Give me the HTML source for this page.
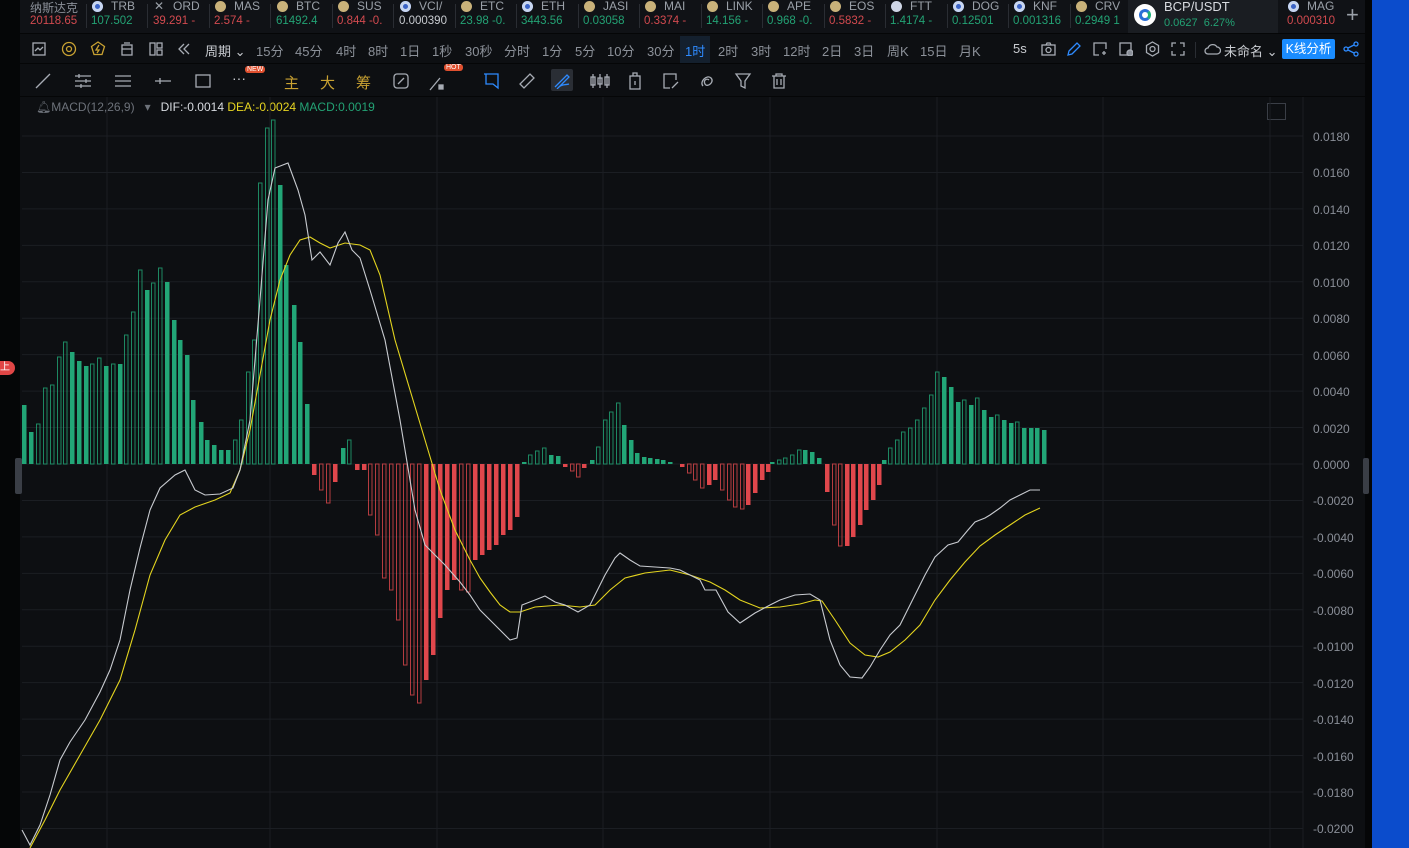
<!DOCTYPE html>
<html><head><meta charset="utf-8">
<style>
*{margin:0;padding:0;box-sizing:border-box}
body{width:1409px;height:848px;overflow:hidden;background:#0d0f12;font-family:"Liberation Sans","Noto Sans CJK SC",sans-serif;position:relative;color:#8a8f98}
.abs{position:absolute}
#blue{left:1372px;top:0;width:37px;height:848px;background:#0b4ccc}
#edge{left:1365px;top:0;width:7px;height:848px;background:#050607}
#leftb{left:0;top:0;width:20px;height:848px;background:#050607}
#tick{left:20px;top:0;width:1345px;height:33px;background:#101216}
.tk{position:absolute;top:0;height:33px;width:60px;overflow:hidden;font-size:11.5px;white-space:nowrap}
.tk .n{position:absolute;left:22px;top:-1px;color:#9aa0a8;font-size:12px}
.tk .i{position:absolute;left:3px;top:1px;width:11px;height:11px;border-radius:50%;background:#c9b27a}
.tk .i.b{background:#3b63c6;box-shadow:inset 0 0 0 3px #c8d6f0}
.tk .p{position:absolute;left:2px;top:15px}
.g{color:#23a274}.r{color:#d24a4f}.w{color:#c9ccd1}
.sep{position:absolute;top:4px;width:1px;height:24px;background:#2a2d33}
#row2{left:20px;top:36px;width:1345px;height:27px;font-size:13px;color:#8c9199}
#row2 span{position:absolute;top:5px}
#row3{left:20px;top:66px;width:1345px;height:30px}
.ic{position:absolute;stroke:#a7acb4;fill:none;stroke-width:1.3}
#hdr{left:36px;top:100px;font-size:12px}
.ylab{position:absolute;left:1313px;font-size:12px;color:#8a8f98}
</style></head><body>
<div class="abs" id="leftb"></div>
<div class="abs" id="edge"></div>
<div class="abs" id="blue"></div>
<div class="abs" id="tick">
 <div class="tk" style="left:8px"><span class="n" style="left:2px;color:#8a8f98">纳斯达克</span><span class="p r">20118.65</span></div>
 <div class="tk" style="left:69px"><i class="i b"></i><span class="n">TRB</span><span class="p g">107.502</span></div>
 <div class="tk" style="left:131px"><span class="n" style="left:3px">✕</span><span class="n">ORD</span><span class="p r">39.291 -</span></div>
 <div class="tk" style="left:192px"><i class="i"></i><span class="n">MAS</span><span class="p r">2.574 -</span></div>
 <div class="tk" style="left:254px"><i class="i"></i><span class="n">BTC</span><span class="p g">61492.4</span></div>
 <div class="tk" style="left:315px"><i class="i"></i><span class="n">SUS</span><span class="p r">0.844 -0.</span></div>
 <div class="tk" style="left:377px"><i class="i b"></i><span class="n">VCI/</span><span class="p w">0.000390</span></div>
 <div class="tk" style="left:438px"><i class="i"></i><span class="n">ETC</span><span class="p g">23.98 -0.</span></div>
 <div class="tk" style="left:499px"><i class="i b"></i><span class="n">ETH</span><span class="p g">3443.56</span></div>
 <div class="tk" style="left:561px"><i class="i"></i><span class="n">JASI</span><span class="p g">0.03058</span></div>
 <div class="tk" style="left:622px"><i class="i"></i><span class="n">MAI</span><span class="p r">0.3374 -</span></div>
 <div class="tk" style="left:684px"><i class="i"></i><span class="n">LINK</span><span class="p g">14.156 -</span></div>
 <div class="tk" style="left:745px"><i class="i"></i><span class="n">APE</span><span class="p g">0.968 -0.</span></div>
 <div class="tk" style="left:807px"><i class="i"></i><span class="n">EOS</span><span class="p r">0.5832 -</span></div>
 <div class="tk" style="left:868px"><i class="i" style="background:#cfd6e6"></i><span class="n">FTT</span><span class="p g">1.4174 -</span></div>
 <div class="tk" style="left:930px"><i class="i b"></i><span class="n">DOG</span><span class="p g">0.12501</span></div>
 <div class="tk" style="left:991px"><i class="i b"></i><span class="n">KNF</span><span class="p g">0.001316</span></div>
 <div class="tk" style="left:1053px"><i class="i"></i><span class="n">CRV</span><span class="p g">0.2949 1</span></div>
 <div style="position:absolute;left:1108px;top:0;width:150px;height:33px;background:#1a1d22">
  <div style="position:absolute;left:6px;top:4px;width:22px;height:22px;border-radius:50%;background:#fff"><div style="position:absolute;left:5px;top:5px;width:12px;height:12px;border-radius:50%;border:3px solid #2a6fd6;border-right-color:#1db07a"></div></div>
  <span style="position:absolute;left:36px;top:-1px;color:#d8dbe0;font-size:13px">BCP/USDT</span>
  <span style="position:absolute;left:36px;top:17px;font-size:11px" class="g">0.0627 &nbsp;6.27%</span>
 </div>
 <div class="tk" style="left:1265px"><i class="i b"></i><span class="n">MAG</span><span class="p r">0.000310</span></div>
 <span style="position:absolute;left:1326px;top:2px;font-size:22px;color:#9aa0a8">+</span>
 <div class="sep" style="left:66px"></div><div class="sep" style="left:127px"></div><div class="sep" style="left:189px"></div><div class="sep" style="left:250px"></div><div class="sep" style="left:312px"></div><div class="sep" style="left:373px"></div><div class="sep" style="left:435px"></div><div class="sep" style="left:496px"></div><div class="sep" style="left:558px"></div><div class="sep" style="left:619px"></div><div class="sep" style="left:681px"></div><div class="sep" style="left:742px"></div><div class="sep" style="left:804px"></div><div class="sep" style="left:865px"></div><div class="sep" style="left:927px"></div><div class="sep" style="left:988px"></div><div class="sep" style="left:1050px"></div>
</div>
<div class="abs" style="left:20px;top:33px;width:1345px;height:1px;background:#050607"></div>
<div class="abs" id="row2">
 <svg class="ic" style="left:12px;top:6px" width="14" height="14"><rect x="1" y="1" width="12" height="12"/><path d="M3 9l3-3 2 2 3-3"/></svg>
 <svg class="ic" style="left:41px;top:5px;stroke:#c9a232" width="16" height="16"><circle cx="8" cy="8" r="6.5"/><circle cx="8" cy="8" r="2.5"/></svg>
 <svg class="ic" style="left:70px;top:5px;stroke:#c9a232" width="16" height="16"><path d="M8 1l6.5 4.5-2.5 8h-8l-2.5-8z"/><path d="M9 4l-3 5h3l-2 3"/></svg>
 <svg class="ic" style="left:100px;top:6px" width="14" height="14"><rect x="2" y="3" width="10" height="10"/><path d="M2 7h10M4 1h6"/></svg>
 <svg class="ic" style="left:129px;top:6px" width="14" height="14"><rect x="1" y="1" width="5" height="12"/><rect x="8" y="1" width="5" height="5"/><rect x="8" y="8" width="5" height="5"/></svg>
 <svg class="ic" style="left:157px;top:6px" width="14" height="14"><path d="M7 2l-5 5 5 5M12 2l-5 5 5 5"/></svg>
 <span style="left:185px;color:#c9ccd1">周期 ⌄</span>
 <span style="left:236px">15分</span><span style="left:275px">45分</span><span style="left:316px">4时</span><span style="left:348px">8时</span><span style="left:380px">1日</span><span style="left:412px">1秒</span><span style="left:445px">30秒</span><span style="left:484px">分时</span><span style="left:522px">1分</span><span style="left:555px">5分</span><span style="left:587px">10分</span><span style="left:627px">30分</span>
 <div style="position:absolute;left:660px;top:0;width:30px;height:27px;background:#14202e"></div>
 <span style="left:665px;color:#2e8bff">1时</span><span style="left:698px">2时</span><span style="left:731px">3时</span><span style="left:763px">12时</span><span style="left:802px">2日</span><span style="left:834px">3日</span><span style="left:867px">周K</span><span style="left:900px">15日</span><span style="left:939px">月K</span>
 <span style="left:993px;color:#c9ccd1">5s</span>
 <svg class="ic" style="left:1021px;top:6px" width="15" height="14"><rect x="1" y="3" width="13" height="10"/><circle cx="7.5" cy="8" r="2.5"/><path d="M5 3l1-2h3l1 2"/></svg>
 <svg class="ic" style="left:1046px;top:6px;stroke:#2e8bff" width="15" height="15"><path d="M2 13l1-4 8-8 3 3-8 8z"/></svg>
 <svg class="ic" style="left:1073px;top:6px" width="14" height="14"><path d="M6 13H1V1h12v6M9 11h4M11 9v4"/></svg>
 <svg class="ic" style="left:1099px;top:6px" width="14" height="14"><rect x="1" y="1" width="11" height="12"/><circle cx="11" cy="11" r="3" fill="#8a8f98"/></svg>
 <svg class="ic" style="left:1125px;top:5px" width="15" height="16"><path d="M7.5 1l6 3.5v7l-6 3.5-6-3.5v-7z"/><circle cx="7.5" cy="8" r="2.5"/></svg>
 <svg class="ic" style="left:1151px;top:6px" width="14" height="14"><path d="M1 5V1h4M9 1h4v4M13 9v4H9M5 13H1V9"/></svg>
 <div style="position:absolute;left:1175px;top:6px;width:1px;height:16px;background:#2a2d33"></div>
 <svg class="ic" style="left:1184px;top:7px" width="17" height="12"><path d="M4 11a3 3 0 010-6 5 5 0 019-1 3.5 3.5 0 010 7z"/></svg>
 <span style="left:1204px;color:#c9ccd1">未命名 ⌄</span>
 <div style="position:absolute;left:1262px;top:3px;width:53px;height:20px;background:#1a8cff;color:#fff;font-size:12.5px;text-align:center;line-height:20px;border-radius:2px">K线分析</div>
 <svg class="ic" style="left:1323px;top:5px;stroke:#2e8bff" width="16" height="16"><circle cx="3" cy="8" r="2"/><circle cx="13" cy="3" r="2"/><circle cx="13" cy="13" r="2"/><path d="M5 7l6-3M5 9l6 3"/></svg>
</div>
<div class="abs" style="left:20px;top:63px;width:1345px;height:1px;background:#050607"></div>
<div class="abs" id="row3">
 <svg class="ic" style="left:14px;top:6px" width="18" height="18"><path d="M2 16L16 2"/></svg>
 <svg class="ic" style="left:54px;top:6px" width="18" height="18"><path d="M1 4h16M1 9h16M1 14h16M5 2v4M12 7v4M7 12v4"/></svg>
 <svg class="ic" style="left:94px;top:6px" width="18" height="18"><path d="M1 4h16M1 9h16M1 14h16"/></svg>
 <svg class="ic" style="left:134px;top:6px" width="18" height="18"><path d="M1 9h16M6 6v6"/></svg>
 <svg class="ic" style="left:174px;top:6px" width="18" height="18"><rect x="2" y="3" width="14" height="12"/></svg>
 <span class="abs" style="left:212px;top:4px;color:#c9ccd1;font-size:14px">···</span>
 <span class="abs" style="left:225px;top:0;background:#e0502f;color:#fff;font-size:7px;padding:0 2px;border-radius:3px">NEW</span>
 <span class="abs" style="left:264px;top:6px;color:#c9a232;font-size:15px">主</span>
 <span class="abs" style="left:300px;top:6px;color:#c9a232;font-size:15px">大</span>
 <span class="abs" style="left:336px;top:6px;color:#c9a232;font-size:15px">筹</span>
 <svg class="ic" style="left:372px;top:6px" width="18" height="18"><rect x="2" y="2" width="14" height="14" rx="3"/><path d="M6 12l6-6"/></svg>
 <svg class="ic" style="left:408px;top:8px" width="18" height="18"><path d="M2 16L12 4"/><rect x="11" y="11" width="4" height="4" fill="#a7acb4"/></svg>
 <span class="abs" style="left:424px;top:-2px;background:#e0502f;color:#fff;font-size:7px;padding:0 2px;border-radius:3px">HOT</span>
 <svg class="ic" style="left:462px;top:6px;stroke:#2e8bff" width="18" height="18"><path d="M2 2h14v14l-5-4H4V2"/></svg>
 <svg class="ic" style="left:498px;top:6px" width="18" height="18"><path d="M4 14l-2-2L12 2l4 4L6 16z"/></svg>
 <div class="abs" style="left:531px;top:3px;width:22px;height:22px;background:#2a2e35;border-radius:2px"></div>
 <svg class="ic" style="left:533px;top:5px;stroke:#2e8bff" width="18" height="18"><path d="M2 16l12-12 2 2-12 12M6 16c3-3 7-2 10-3"/></svg>
 <svg class="ic" style="left:570px;top:6px" width="20" height="18"><path d="M3 2v14M10 2v14M17 2v14"/><rect x="1" y="5" width="4" height="8"/><rect x="8" y="6" width="4" height="6"/><rect x="15" y="5" width="4" height="8"/></svg>
 <svg class="ic" style="left:607px;top:6px" width="16" height="18"><rect x="3" y="4" width="10" height="13"/><path d="M6 4V1h4v3M8 9v4"/></svg>
 <svg class="ic" style="left:642px;top:6px" width="18" height="18"><path d="M14 8V2H2v14h6M10 16l6-6"/></svg>
 <svg class="ic" style="left:678px;top:6px" width="18" height="18"><path d="M5 14c-4-4 4-12 8-8s-4 10-6 6 2-6 4-4"/></svg>
 <svg class="ic" style="left:714px;top:6px" width="18" height="18"><path d="M2 2h14l-5 7v7l-4-2V9z"/></svg>
 <svg class="ic" style="left:750px;top:6px" width="18" height="18"><path d="M2 4h14M6 4V2h6v2M4 4v12h10V4M7 7v6M11 7v6"/></svg>
</div>
<div class="abs" style="left:20px;top:96px;width:1345px;height:1px;background:#050607"></div>
<div class="abs" id="hdr"><span style="color:#6d727a">🔔︎MACD(12,26,9) &nbsp; ▾ </span>&nbsp; <span style="color:#d8dbe0">DIF:-0.0014</span> <span style="color:#e6d421">DEA:-0.0024</span> <span style="color:#23a274">MACD:0.0019</span></div>
<div class="abs" style="left:1267px;top:103px;width:19px;height:17px;border:1px solid #3a3e46"></div>
<div class="abs" style="left:0;top:361px;width:15px;height:14px;background:#e04646;color:#fff;font-size:10px;border-radius:0 7px 7px 0;line-height:14px">上</div>
<div class="abs" style="left:15px;top:458px;width:7px;height:36px;background:#3a3e46;border-radius:2px"></div>
<div class="abs" style="left:1363px;top:458px;width:6px;height:36px;background:#3a3e46;border-radius:2px"></div>
<svg id="ch" class="abs" style="left:0;top:0" width="1365" height="848"></svg>
<div id="labs"></div>
<script>
var svg=document.getElementById('ch'),h='';
function Y(v){return 464-v*18222;}
for(var k=-10;k<=9;k++){var y=Y(k*0.002);h+='<line x1="22" x2="1303" y1="'+y+'" y2="'+y+'" stroke="#1b1e23"/>';}
[107,270,437,603,770,937,1103,1270,1303].forEach(function(x){h+='<line x1="'+x+'" x2="'+x+'" y1="97" y2="848" stroke="#1b1e23"/>';});
var L='';for(var k=-10;k<=9;k++){var v=k*0.002;L+='<div class="ylab" style="top:'+(Y(v)-6)+'px">'+(v<0?'-':'')+Math.abs(v).toFixed(4)+'</div>';}
document.getElementById('labs').innerHTML=L;
var bars=[[22,405],[29,432],[36,424],[43,388],[50,385],[57,357],[63,342],[70,352],[77,361],[84,366],[90,364],[97,358],[104,366],[111,364],[118,364],[124,335],[131,312],[138,270],[145,290],[151,283],[158,268],[165,282],[172,320],[178,340],[185,355],[191,400],[199,422],[205,440],[212,445],[219,450],[226,450],[233,440],[239,420],[246,372],[252,340],[258,183],[265,128],[271,120],[278,185],[284,265],[292,305],[298,342],[305,404],
[312,475],[319,490],[326,503],[333,482],[341,448],[347,440],[355,470],[362,470],[368,515],[375,535],[382,578],[389,590],[396,620],[403,665],[410,695],[417,703],[424,680],[431,655],[438,618],[445,590],[452,580],[459,590],[466,592],[473,560],[480,555],[487,550],[494,545],[501,535],[508,530],[515,517],
[522,462],[528,455],[535,451],[542,448],[549,455],[556,456],[563,467],[570,471],[576,477],[582,468],[590,460],[596,447],[603,420],[609,412],[616,403],[622,425],[629,440],[635,453],[642,457],[648,458],[655,459],[661,460],[668,462],
[680,467],[687,473],[693,480],[700,488],[707,485],[713,480],[720,490],[727,500],[733,507],[740,509],[746,505],[753,493],[760,480],[766,472],
[770,462],[777,460],[783,458],[790,455],[797,450],[803,450],[810,452],[817,458],
[825,492],[832,525],[838,546],[845,546],[851,537],[858,525],[864,510],[871,500],[877,485],
[882,460],[888,448],[895,440],[901,432],[908,428],[915,420],[922,408],[929,395],[935,372],[942,377],[949,387],[956,402],[962,400],[969,405],[975,398],[982,410],[989,417],[995,415],[1002,420],[1009,423],[1015,422],[1022,428],[1029,428],[1035,428],[1042,430]];
var prev=464;
for(var i=0;i<bars.length;i++){var x=bars[i][0],t=bars[i][1];var up=t<464;var c=up?'#22a677':'#e0474c';
 var hollow=up?(t<prev&&prev<464):(t>prev&&prev>464);
 var y0=Math.min(t,464),hh=Math.abs(t-464);
 if(hollow)h+='<rect x="'+(x+.5)+'" y="'+y0+'" width="3.5" height="'+hh+'" fill="none" stroke="'+c+'" stroke-opacity=".8"/>';
 else h+='<rect x="'+x+'" y="'+y0+'" width="4.5" height="'+hh+'" fill="'+c+'"/>';
 prev=t;}
var dif=[[22,830],[30,845],[40,825],[50,795],[60,760],[70,742],[85,720],[100,692],[110,670],[120,640],[130,590],[140,548],[150,510],[160,488],[175,475],[185,470],[195,490],[205,495],[220,494],[233,488],[240,470],[250,420],[260,300],[268,200],[275,168],[288,163],[298,190],[305,215],[312,260],[320,252],[330,265],[338,243],[345,232],[352,250],[360,258],[370,290],[385,340],[400,420],[415,510],[425,545],[445,565],[460,582],[470,595],[480,610],[495,625],[510,640],[517,638],[522,605],[535,600],[545,596],[555,602],[565,605],[578,612],[590,605],[605,575],[615,558],[620,553],[630,560],[640,566],[655,567],[670,568],[680,570],[700,580],[705,590],[716,590],[728,612],[740,623],[755,613],[770,605],[780,600],[795,595],[810,594],[820,600],[830,640],[840,665],[850,677],[862,678],[870,667],[880,650],[890,635],[900,625],[910,605],[925,575],[935,557],[948,545],[958,542],[968,530],[975,522],[985,518],[990,515],[1000,508],[1010,500],[1020,495],[1030,490],[1040,490]];
var dea=[[30,848],[45,820],[60,790],[80,755],[100,720],[120,680],[135,630],[150,575],[165,540],[180,515],[195,507],[215,500],[230,493],[240,470],[250,430],[260,375],[270,320],[280,280],[290,255],[300,240],[310,237],[320,243],[330,248],[345,243],[360,245],[370,250],[380,275],[395,340],[410,390],[425,440],[440,490],[455,530],[470,560],[480,578],[490,592],[500,605],[510,612],[520,612],[535,607],[560,605],[580,607],[595,605],[610,590],[625,578],[645,573],[670,570],[690,575],[710,582],[725,590],[740,600],[760,608],[780,607],[800,604],[815,600],[822,601],[835,620],[850,643],[865,655],[878,657],[890,652],[905,640],[920,625],[935,600],[950,580],[965,562],[980,546],[995,535],[1010,525],[1025,515],[1040,508]];
function pl(a,c){return '<polyline fill="none" stroke="'+c+'" stroke-width="1.1" points="'+a.map(function(p){return p.join(',')}).join(' ')+'"/>';}
h+=pl(dea,'#e3d41f')+pl(dif,'#c8cbd0');
svg.innerHTML=h;
</script>
</body></html>
